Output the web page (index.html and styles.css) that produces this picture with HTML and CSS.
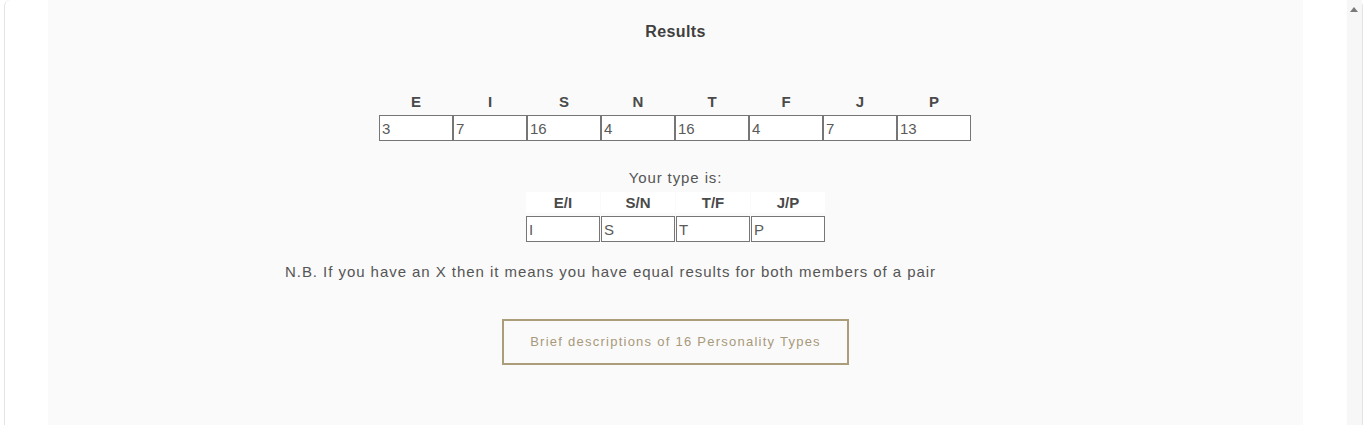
FILE: index.html
```html
<!DOCTYPE html>
<html>
<head>
<meta charset="utf-8">
<link rel="stylesheet" href="styles.css">
</head>
<body>
<div class="frame">
  <div class="content">
    <div class="panel">
      <h2 class="title">Results</h2>
      <div class="scores">
        <div class="scores-head">
          <span>E</span><span>I</span><span>S</span><span>N</span><span>T</span><span>F</span><span>J</span><span>P</span>
        </div>
        <div class="scores-row">
          <input class="box" value="3"><input class="box" value="7"><input class="box" value="16"><input class="box" value="4"><input class="box" value="16"><input class="box" value="4"><input class="box" value="7"><input class="box" value="13">
        </div>
      </div>
      <p class="type-label">Your type is:</p>
      <div class="types">
        <span class="th">E/I</span><span class="th">S/N</span><span class="th">T/F</span><span class="th">J/P</span>
        <input class="box" value="I"><input class="box" value="S"><input class="box" value="T"><input class="box" value="P">
      </div>
      <p class="note">N.B. If you have an X then it means you have equal results for both members of a pair</p>
      <div class="btn-wrap"><a class="btn">Brief descriptions of 16 Personality Types</a></div>
    </div>
  </div>
  <div class="scrollbar"><span class="arrow"></span></div>
</div>
</body>
</html>
```

FILE: styles.css
```css
html, body {
  margin: 0;
  padding: 0;
  height: 425px;
  overflow: hidden;
  background: #ffffff;
  font-family: "Liberation Sans", Arial, sans-serif;
  color: #444444;
}
.frame {
  margin-left: 4px;
  width: 1357px;
  height: 425px;
  border-left: 1px solid #e4e4e4;
  border-right: 1px solid #e4e4e4;
  border-radius: 6px 6px 0 0;
  display: flex;
  background: #ffffff;
}
.content {
  flex: 1;
  padding: 0 44px 0 43px;
}
.panel {
  background: #fafafa;
  height: 425px;
  display: flex;
  flex-direction: column;
  align-items: center;
}
.title {
  margin: 23px 0 0;
  font-size: 16px;
  line-height: 18px;
  font-weight: bold;
  color: #3f3f3f;
  letter-spacing: 0.4px;
}
.scores {
  margin-top: 52px;
  margin-right: 1px;
}
.scores-head {
  display: grid;
  grid-template-columns: repeat(8, 74px);
  font-size: 15px;
  font-weight: bold;
  line-height: 18px;
  text-align: center;
  color: #4a4a4a;
  padding-bottom: 4px;
}
.scores-row {
  display: grid;
  grid-template-columns: repeat(8, 74px);
}
.box {
  box-sizing: border-box;
  width: 74px;
  height: 26px;
  margin: 0;
  padding: 0 2px;
  border: 1px solid #767676;
  border-radius: 0;
  background: #ffffff;
  font-family: "Liberation Sans", Arial, sans-serif;
  font-size: 15px;
  color: #5a5a5a;
  outline: none;
}
.type-label {
  margin: 28px 0 0;
  font-size: 15px;
  line-height: 18px;
  letter-spacing: 0.9px;
  color: #555;
}
.types {
  margin-top: 5px;
  display: grid;
  grid-template-columns: repeat(4, 74px);
  column-gap: 1px;
  row-gap: 3px;
}
.th {
  background: #ffffff;
  text-align: center;
  font-size: 15px;
  font-weight: bold;
  line-height: 21px;
  color: #4a4a4a;
}
.note {
  align-self: flex-start;
  margin: 21px 0 0 237px;
  font-size: 15px;
  line-height: 18px;
  letter-spacing: 0.95px;
  color: #555;
}
.btn-wrap {
  margin-top: 38px;
}
.btn {
  display: block;
  box-sizing: border-box;
  width: 347px;
  height: 46px;
  border: 2px solid #ab9c7a;
  text-align: center;
  line-height: 42px;
  font-size: 13px;
  letter-spacing: 1.25px;
  color: #a8997a;
}
.scrollbar {
  width: 15px;
  background: #f7f7f7;
  position: relative;
}
.arrow {
  position: absolute;
  top: 7px;
  left: 3px;
  width: 0;
  height: 0;
  border-left: 4px solid transparent;
  border-right: 4px solid transparent;
  border-bottom: 5px solid #7a7a7a;
}
```
